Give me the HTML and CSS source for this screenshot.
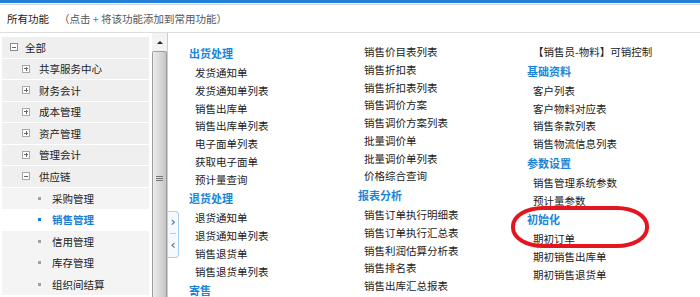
FILE: index.html
```html
<!DOCTYPE html>
<html lang="zh-CN">
<head>
    <meta charset="UTF-8">
    <title>所有功能</title>
    <link rel="stylesheet" href="styles.css">
</head>
<body>

<div class="topbar"></div>
<div class="title">所有功能<span class="hint">（点击 <b>+</b> 将该功能添加到常用功能）</span></div>

<div class="main">
    <!-- Left tree -->
    <div class="side">
        <ul class="tree">
            <li class="row lvl0"><span class="box minus"></span>全部</li>
            <li class="row lvl1"><span class="box plus"></span>共享服务中心</li>
            <li class="row lvl1"><span class="box plus"></span>财务会计</li>
            <li class="row lvl1"><span class="box plus"></span>成本管理</li>
            <li class="row lvl1"><span class="box plus"></span>资产管理</li>
            <li class="row lvl1"><span class="box plus"></span>管理会计</li>
            <li class="row lvl1"><span class="box minus"></span>供应链</li>
            <li class="row leaf"><span class="dot"></span>采购管理</li>
            <li class="row leaf active"><span class="dot"></span>销售管理</li>
            <li class="row leaf"><span class="dot"></span>信用管理</li>
            <li class="row leaf"><span class="dot"></span>库存管理</li>
            <li class="row leaf"><span class="dot"></span>组织间结算</li>
        </ul>
        <div class="scroll">
            <div class="scroll-up"><span class="tri"></span></div>
            <div class="thumb"><span class="grip"></span></div>
        </div>
    </div>

    <div class="toggle">
        <span class="chev">&rsaquo;</span>
        <span class="sep"></span>
        <span class="chev">&lsaquo;</span>
    </div>

    <!-- Function list -->
    <div class="content">
        <div class="col">
            <div class="grp">出货处理</div>
            <div class="item">发货通知单</div>
            <div class="item">发货通知单列表</div>
            <div class="item">销售出库单</div>
            <div class="item">销售出库单列表</div>
            <div class="item">电子面单列表</div>
            <div class="item">获取电子面单</div>
            <div class="item">预计量查询</div>
            <div class="grp">退货处理</div>
            <div class="item">退货通知单</div>
            <div class="item">退货通知单列表</div>
            <div class="item">销售退货单</div>
            <div class="item">销售退货单列表</div>
            <div class="grp">寄售</div>
        </div>
        <div class="col">
            <div class="item">销售价目表列表</div>
            <div class="item">销售折扣表</div>
            <div class="item">销售折扣表列表</div>
            <div class="item">销售调价方案</div>
            <div class="item">销售调价方案列表</div>
            <div class="item">批量调价单</div>
            <div class="item">批量调价单列表</div>
            <div class="item">价格综合查询</div>
            <div class="grp">报表分析</div>
            <div class="item">销售订单执行明细表</div>
            <div class="item">销售订单执行汇总表</div>
            <div class="item">销售利润估算分析表</div>
            <div class="item">销售排名表</div>
            <div class="item">销售出库汇总报表</div>
        </div>
        <div class="col">
            <div class="item">【销售员-物料】可销控制</div>
            <div class="grp">基础资料</div>
            <div class="item">客户列表</div>
            <div class="item">客户物料对应表</div>
            <div class="item">销售条款列表</div>
            <div class="item">销售物流信息列表</div>
            <div class="grp">参数设置</div>
            <div class="item">销售管理系统参数</div>
            <div class="item">预计量参数</div>
            <div class="grp">初始化</div>
            <div class="item">期初订单</div>
            <div class="item">期初销售出库单</div>
            <div class="item">期初销售退货单</div>
        </div>
    </div>
</div>

<!-- red hand-drawn mark -->
<div class="mark"></div>

</body>
</html>
```

FILE: styles.css
```css
* {
    box-sizing: border-box;
}
body {
    margin: 0;
    width: 700px;
    height: 297px;
    overflow: hidden;
    background: #fff;
    font-family: "Noto Sans CJK SC", "Noto Sans", sans-serif;
    font-size: 10.5px;
    color: #222;
    position: relative;
}
.topbar {
    height: 4px;
    background: #2280d8;
    border-bottom: 1px solid #fff;
}
.title {
    height: 29px;
    line-height: 27px;
    padding-left: 7px;
    border-top: 1px solid #d2d2d2;
    border-bottom: 1px solid #dedede;
    color: #222;
}
.title .hint {
    margin-left: 10px;
    color: #555;
}
.title .hint b {
    font-weight: normal;
    color: #1a86d8;
}
.main {
    display: flex;
    height: 264px;
    position: relative;
}

/* tree */
.side {
    width: 168px;
    display: flex;
    border-right: 1px solid #cdcdcd;
}
.tree {
    list-style: none;
    margin: 0;
    padding: 4px 0 0 2px;
    width: 149px;
}
.row {
    display: flex;
    align-items: center;
    height: 20.5px;
    margin-bottom: 1px;
    background: #efefef;
    white-space: nowrap;
}
.row.lvl0 {
    padding-left: 8px;
}
.row.lvl1 {
    padding-left: 20px;
}
.row.leaf {
    padding-left: 36px;
    background: #f4f4f4;
    margin-bottom: 0;
    height: 21.5px;
}
.row.active {
    background: #fff;
    color: #1a7fd4;
    font-weight: bold;
}
.box {
    width: 8px;
    height: 8px;
    border: 1px solid #8a8a8a;
    margin-right: 7px;
    position: relative;
    background: #fff;
}
.lvl1 .box {
    border-color: #a8a8a8;
    margin-right: 9px;
}
.box::before,
.box::after {
    content: "";
    position: absolute;
    background: #666;
}
.box::before {
    left: 1px;
    right: 1px;
    top: 2.5px;
    height: 1px;
}
.box.plus::after {
    top: 1px;
    bottom: 1px;
    left: 2.5px;
    width: 1px;
}
.dot {
    width: 3px;
    height: 3px;
    background: #a0a0a0;
    margin-right: 11px;
}
.active .dot {
    background: #1a7fd4;
}

/* scrollbar */
.scroll {
    width: 15px;
    margin-left: 3px;
    display: flex;
    flex-direction: column;
}
.scroll-up {
    height: 18px;
    display: flex;
    align-items: center;
    justify-content: center;
    background: #f3f3f3;
}
.tri {
    width: 0;
    height: 0;
    border-left: 3px solid transparent;
    border-right: 3px solid transparent;
    border-bottom: 3px solid #222;
}
.thumb {
    flex: 1;
    border: 1px solid #9c9c9c;
    border-bottom: none;
    border-radius: 2px 2px 0 0;
    background: linear-gradient(to right, #ececec, #d6d6d6 60%, #c4c4c4);
    position: relative;
}
.grip {
    position: absolute;
    left: 3px;
    top: 124px;
    width: 7px;
    height: 5px;
    border-top: 1px solid #777;
    border-bottom: 1px solid #777;
}
.grip::after {
    content: "";
    position: absolute;
    left: 0;
    right: 0;
    top: 1px;
    height: 1px;
    background: #777;
}

/* collapse toggle */
.toggle {
    position: absolute;
    left: 168px;
    top: 178px;
    width: 11px;
    height: 47px;
    border: 1px solid #a9cff0;
    border-left: none;
    border-radius: 0 4px 4px 0;
    background: #f5faff;
    display: flex;
    flex-direction: column;
    align-items: center;
    justify-content: space-between;
    padding: 3px 0 5px;
}
.chev {
    font-family: "DejaVu Sans", sans-serif;
    font-size: 13px;
    line-height: 14px;
    color: #555;
}
.sep {
    width: 6px;
    height: 1px;
    background: #c8c8c8;
}

/* function columns */
.content {
    display: flex;
    padding: 10px 0 0 21px;
}
.col {
    width: 169px;
}
.grp {
    height: 20px;
    line-height: 20px;
    margin-bottom: 1px;
    font-size: 11px;
    font-weight: bold;
    color: #1a86d8;
    white-space: nowrap;
}
.item {
    height: 17.75px;
    line-height: 17.75px;
    padding-left: 6px;
    white-space: nowrap;
}

.mark {
    position: absolute;
    left: 511px;
    top: 206px;
    width: 138px;
    height: 42px;
    border: 4px solid #e3161f;
    border-radius: 32px / 20px;
}
```
